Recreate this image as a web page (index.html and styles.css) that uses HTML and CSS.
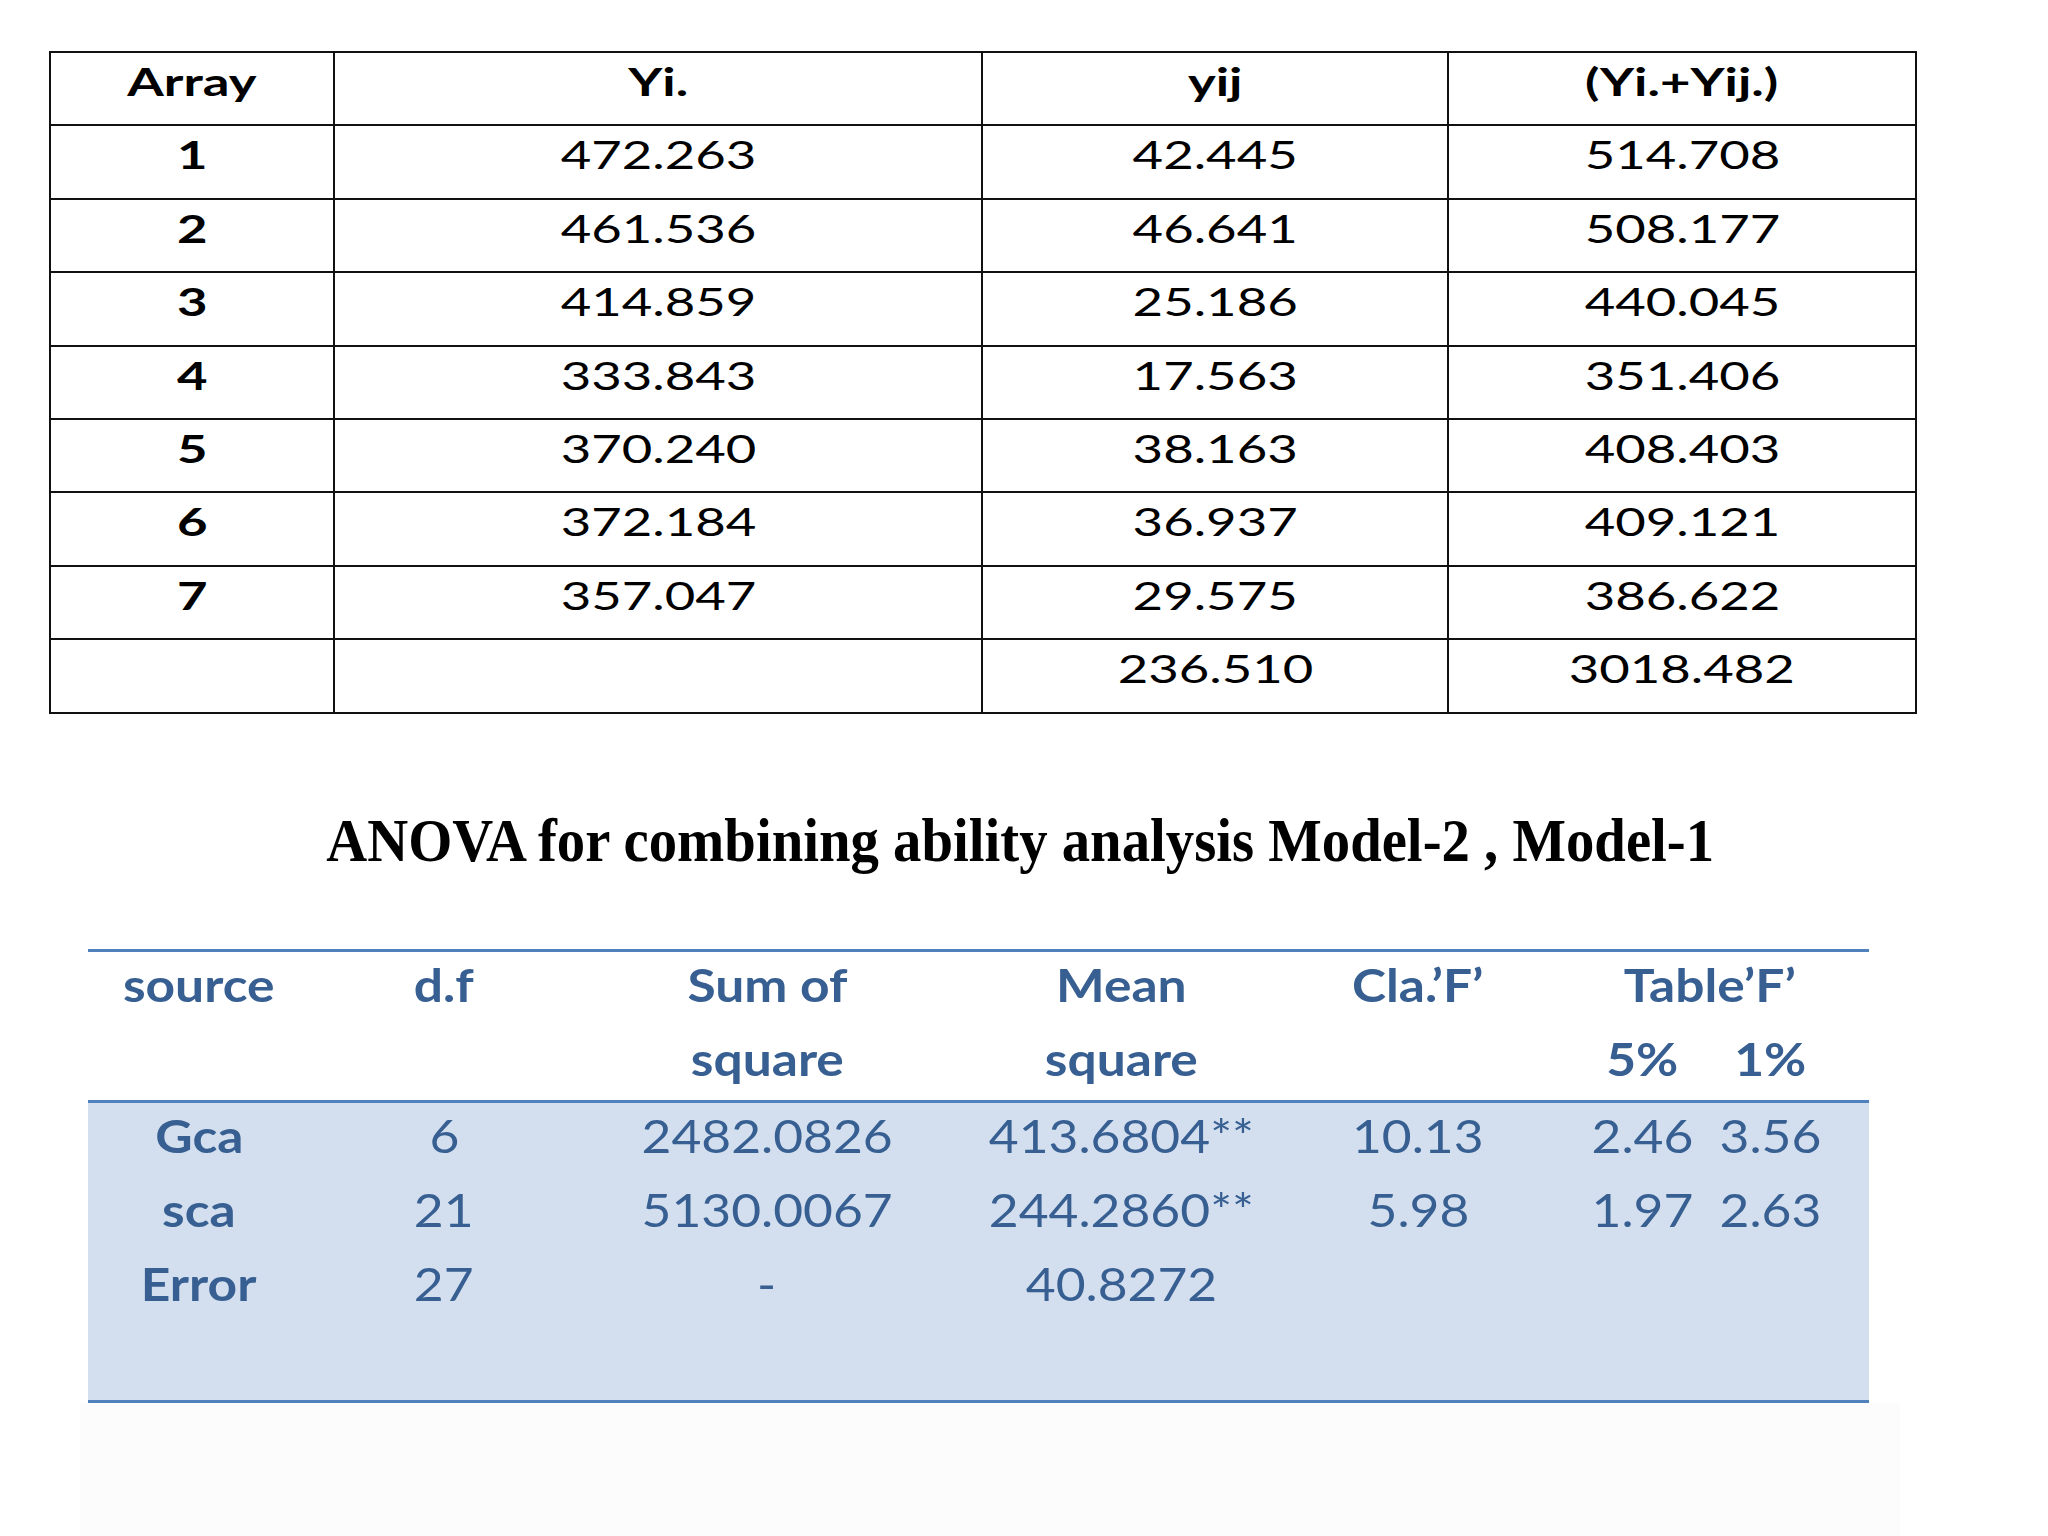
FILE: index.html
```html
<!DOCTYPE html>
<html lang="en">
<head>
<meta charset="utf-8">
<title>Combining ability analysis</title>
<link rel="stylesheet" href="styles.css">
</head>
<body>
<main class="page">
  <table class="sums">
    <colgroup>
      <col class="c-array"><col class="c-yi"><col class="c-yij"><col class="c-tot">
    </colgroup>
    <thead>
      <tr><th><span class="s1">Array</span></th><th><span class="s1">Yi.</span></th><th><span class="s1">yij</span></th><th><span class="s1">(Yi.+Yij.)</span></th></tr>
    </thead>
    <tbody>
      <tr><th><span class="s1">1</span></th><td><span class="s1">472.263</span></td><td><span class="s1">42.445</span></td><td><span class="s1">514.708</span></td></tr>
      <tr><th><span class="s1">2</span></th><td><span class="s1">461.536</span></td><td><span class="s1">46.641</span></td><td><span class="s1">508.177</span></td></tr>
      <tr><th><span class="s1">3</span></th><td><span class="s1">414.859</span></td><td><span class="s1">25.186</span></td><td><span class="s1">440.045</span></td></tr>
      <tr><th><span class="s1">4</span></th><td><span class="s1">333.843</span></td><td><span class="s1">17.563</span></td><td><span class="s1">351.406</span></td></tr>
      <tr><th><span class="s1">5</span></th><td><span class="s1">370.240</span></td><td><span class="s1">38.163</span></td><td><span class="s1">408.403</span></td></tr>
      <tr><th><span class="s1">6</span></th><td><span class="s1">372.184</span></td><td><span class="s1">36.937</span></td><td><span class="s1">409.121</span></td></tr>
      <tr><th><span class="s1">7</span></th><td><span class="s1">357.047</span></td><td><span class="s1">29.575</span></td><td><span class="s1">386.622</span></td></tr>
      <tr><th></th><td></td><td><span class="s1">236.510</span></td><td><span class="s1">3018.482</span></td></tr>
    </tbody>
  </table>

  <h1 class="title"><span class="s3">ANOVA for combining ability analysis Model-2 , Model-1</span></h1>

  <table class="anova">
    <colgroup>
      <col class="a1"><col class="a2"><col class="a3"><col class="a4"><col class="a5"><col class="a6">
    </colgroup>
    <thead>
      <tr class="h1"><th><span class="s2">source</span></th><th><span class="s2">d.f</span></th><th><span class="s2">Sum of</span></th><th><span class="s2">Mean</span></th><th><span class="s2">Cla.’F’</span></th><th><span class="s2">Table’F’</span></th></tr>
      <tr class="h2"><th></th><th></th><th><span class="s2">square</span></th><th><span class="s2">square</span></th><th></th><th><div class="pair"><span class="s2">5%</span><span class="s2">1%</span></div></th></tr>
    </thead>
    <tbody>
      <tr><th><span class="s2">Gca</span></th><td><span class="s2">6</span></td><td><span class="s2">2482.0826</span></td><td><span class="s2">413.6804**</span></td><td><span class="s2">10.13</span></td><td><div class="pair"><span class="s2">2.46</span><span class="s2">3.56</span></div></td></tr>
      <tr><th><span class="s2">sca</span></th><td><span class="s2">21</span></td><td><span class="s2">5130.0067</span></td><td><span class="s2">244.2860**</span></td><td><span class="s2">5.98</span></td><td><div class="pair"><span class="s2">1.97</span><span class="s2">2.63</span></div></td></tr>
      <tr><th><span class="s2">Error</span></th><td><span class="s2">27</span></td><td><span class="s2">-</span></td><td><span class="s2">40.8272</span></td><td></td><td></td></tr>
      <tr class="spacer"><th></th><td></td><td></td><td></td><td></td><td></td></tr>
    </tbody>
  </table>
  <div class="shade"></div>
</main>
</body>
</html>
```

FILE: styles.css
```css
html, body {
  margin: 0;
  padding: 0;
  background: #ffffff;
}

.page {
  width: 2048px;
  padding-top: 51px;
  box-sizing: border-box;
}

/* ---------- first table ---------- */
.sums {
  border-collapse: collapse;
  table-layout: fixed;
  width: 1866px;
  margin-left: 49px;
  font-family: Lato, "Open Sans", sans-serif;
  font-size: 39px;
  color: #000;
}
.sums .c-array { width: 284px; }
.sums .c-yi { width: 648px; }
.sums .c-yij { width: 466px; }
.sums .c-tot { width: 468px; }

.sums th,
.sums td {
  border: 2px solid #111;
  height: 71.4px;
  padding: 0;
  text-align: center;
  vertical-align: top;
  line-height: 57px;
}
.sums th { font-weight: 700; }
.sums td { font-weight: 400; }

.s1 {
  display: inline-block;
  transform: scaleX(1.35);
}

/* ---------- title ---------- */
.title {
  margin: 94px 8px 0 0;
  font-family: "Liberation Serif", "Times New Roman", serif;
  font-weight: 700;
  font-size: 61px;
  line-height: 66px;
  text-align: center;
  color: #000;
}
.s3 {
  display: inline-block;
  transform: scaleX(0.93);
}

/* ---------- anova table ---------- */
.anova {
  margin-top: 75px;
  margin-left: 88px;
  border-collapse: collapse;
  table-layout: fixed;
  width: 1781px;
  font-family: Lato, "Open Sans", sans-serif;
  font-size: 46px;
  color: #375f92;
}
.anova .a1 { width: 222px; }
.anova .a2 { width: 268px; }
.anova .a3 { width: 378px; }
.anova .a4 { width: 330px; }
.anova .a5 { width: 264px; }
.anova .a6 { width: 319px; }

.anova th,
.anova td {
  padding: 0;
  height: 74px;
  text-align: center;
  vertical-align: top;
  line-height: 66px;
}
.anova thead th { font-weight: 700; }
.anova tbody th { font-weight: 700; }
.anova tbody td { font-weight: 400; }

.anova thead tr.h1 th { border-top: 3px solid #4f81bd; }
.anova thead tr.h2 th { border-bottom: 3px solid #4f81bd; }
.anova tbody tr { background: #d3dfee; }
.anova tbody tr.spacer th,
.anova tbody tr.spacer td {
  height: 75px;
  border-bottom: 3px solid #4f81bd;
}

.pair {
  display: grid;
  grid-template-columns: 128px 128px;
  padding-left: 28px;
}
.pair .s2 { justify-self: center; }

.s2 {
  display: inline-block;
  transform: scaleX(1.12);
}

.shade {
  margin-left: 80px;
  width: 1820px;
  height: 133px;
  background: #fcfcfd;
}
```
